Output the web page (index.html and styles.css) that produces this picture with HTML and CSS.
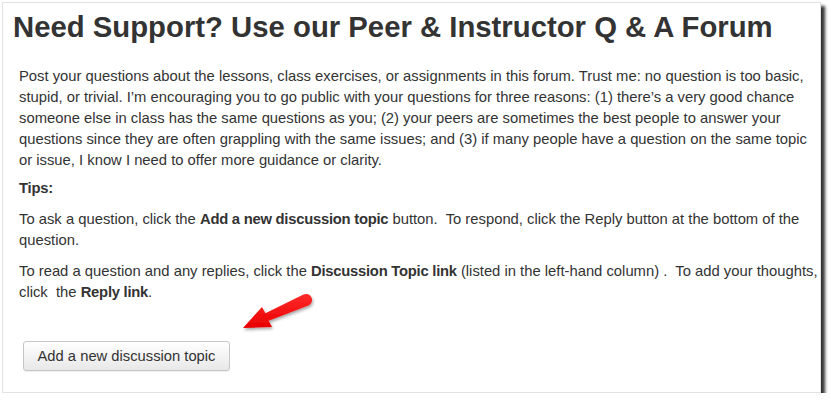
FILE: index.html
```html
<!DOCTYPE html>
<html lang="en">
<head>
<meta charset="utf-8">
<title>Need Support?</title>
<link rel="stylesheet" href="styles.css">
</head>
<body>
<div class="panel">
  <h1 class="title">Need Support? Use our Peer &amp; Instructor Q &amp; A Forum</h1>
  <div class="content">
    <p class="intro">Post your questions about the lessons, class exercises, or assignments in this forum. Trust me: no question is too basic,<br>stupid, or trivial. I’m encouraging you to go public with your questions for three reasons: (1) there’s a very good chance<br>someone else in class has the same questions as you; (2) your peers are sometimes the best people to answer your<br>questions since they are often grappling with the same issues; and (3) if many people have a question on the same topic<br>or issue, I know I need to offer more guidance or clarity.</p>
    <p class="tips"><strong>Tips:</strong></p>
    <p class="tip">To ask a question, click the <strong>Add a new discussion topic</strong> button.&nbsp; To respond, click the Reply button at the bottom of the<br>question.</p>
    <p class="tip">To read a question and any replies, click the <strong>Discussion Topic link</strong> (listed in the left-hand column) .&nbsp; To add your thoughts,<br>click&nbsp; the <strong>Reply link</strong>.</p>
    <button class="btn" type="button">Add a new discussion topic</button>
  </div>
  <svg class="arrow" width="90" height="60" viewBox="230 285 90 60" aria-hidden="true">
    <defs>
      <linearGradient id="ag" x1="0" y1="0" x2="0" y2="1">
        <stop offset="0" stop-color="#ff2a2a"/>
        <stop offset="1" stop-color="#e80000"/>
      </linearGradient>
      <filter id="sh" x="-20%" y="-20%" width="140%" height="140%">
        <feDropShadow dx="1" dy="2" stdDeviation="1.5" flood-color="#000" flood-opacity="0.35"/>
      </filter>
    </defs>
    <path d="M243,328 L262,307 L265.4,313.3 L303.5,294.5 A6,6 0 0 1 308.5,305.5 L268.6,320.7 L272,327 Z" fill="url(#ag)" filter="url(#sh)"/>
  </svg>
</div>
</body>
</html>
```

FILE: styles.css
```css
html, body {
  margin: 0;
  padding: 0;
  background: #ffffff;
}

.panel {
  position: relative;
  margin: 2px 0 0 2px;
  width: 819px;
  box-sizing: border-box;
  border: 1px solid #e2e2e2;
  background: #fff;
  box-shadow: 4px 4px 3px rgba(0, 0, 0, 0.8);
  padding: 0 1px 21px 0;
  font-family: "Liberation Sans", Arial, Helvetica, sans-serif;
  color: #333;
}

.title {
  margin: 6px 0 0 0;
  padding-left: 10px;
  font-size: 29.3px;
  line-height: 36px;
  font-weight: bold;
  color: #333;
  white-space: nowrap;
}

.content {
  padding-left: 16px;
  font-size: 14.8px;
  line-height: 21px;
}

.content p {
  margin: 0;
}

.content strong {
  letter-spacing: -0.25px;
}

.intro {
  margin-top: 21px !important;
}

.tips {
  margin-top: 7px !important;
}

.tip {
  margin-top: 10px !important;
}

.btn {
  display: block;
  margin: 38px 0 0 4px;
  width: 207px;
  height: 30px;
  box-sizing: border-box;
  border: 1px solid #c6c6c6;
  border-radius: 3px;
  background: linear-gradient(#ffffff, #e8e8e8);
  box-shadow: 0 1px 0 rgba(0, 0, 0, 0.06);
  font-family: "Liberation Sans", Arial, Helvetica, sans-serif;
  font-size: 14.75px;
  letter-spacing: 0;
  color: #333;
  padding: 0;
  text-align: center;
}

.arrow {
  position: absolute;
  left: 227px;
  top: 282px;
}
```
